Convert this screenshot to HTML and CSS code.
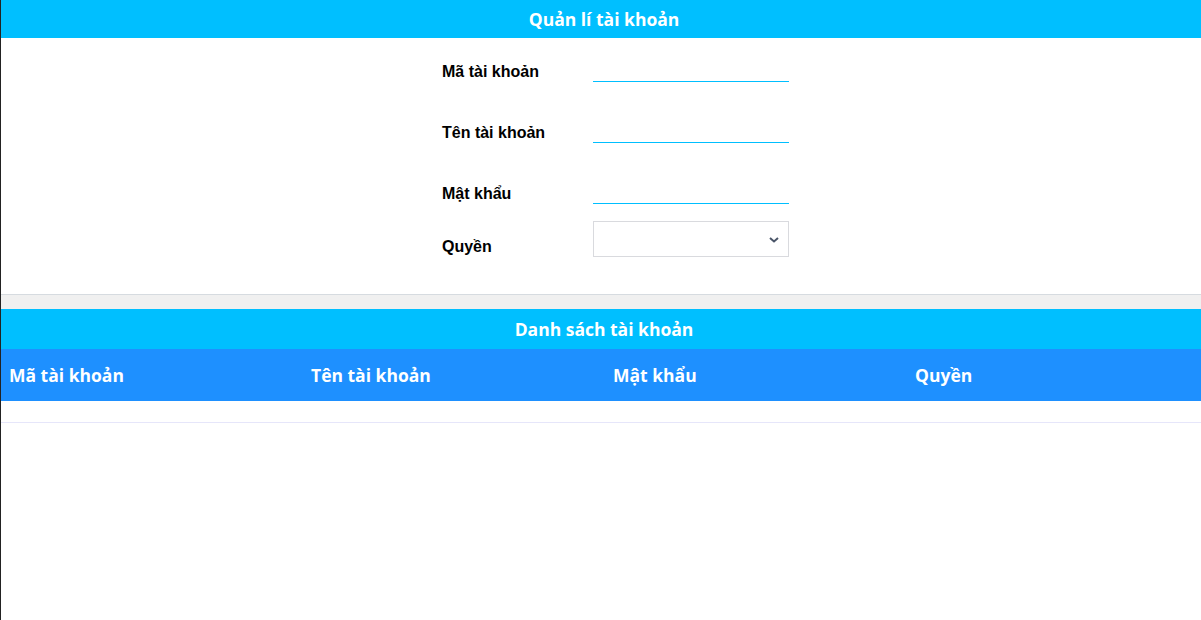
FILE: index.html
```html
<!DOCTYPE html>
<html lang="vi">
<head>
<meta charset="utf-8">
<title>Quản lí tài khoản</title>
<link rel="stylesheet" href="styles.css">
</head>
<body>
<div class="page">
  <div class="bar bar-top">Quản lí tài khoản</div>
  <div class="form-area">
    <div class="form">
      <div class="row">
        <label class="label">Mã tài khoản</label>
        <input class="field" type="text">
      </div>
      <div class="row">
        <label class="label">Tên tài khoản</label>
        <input class="field" type="text">
      </div>
      <div class="row">
        <label class="label">Mật khẩu</label>
        <input class="field" type="password">
      </div>
      <div class="row row-select">
        <label class="label">Quyền</label>
        <div class="select-wrap">
          <select class="select"><option></option></select>
          <svg class="chev" width="10" height="6" viewBox="0 0 10 6"><path d="M1 1 L5 4.5 L9 1" fill="none" stroke="#4a5568" stroke-width="2"/></svg>
        </div>
      </div>
    </div>
  </div>
  <div class="spacer"></div>
  <div class="bar bar-list">Danh sách tài khoản</div>
  <div class="thead">
    <div class="th">Mã tài khoản</div>
    <div class="th">Tên tài khoản</div>
    <div class="th">Mật khẩu</div>
    <div class="th">Quyền</div>
  </div>
  <div class="tbody"></div>
</div>
</body>
</html>
```
FILE: styles.css
```css
html, body { margin: 0; padding: 0; background: #fff; }
.page {
  border-left: 1px solid #222;
  min-height: 620px;
  box-sizing: border-box;
  font-family: "Open Sans", "Noto Sans", sans-serif;
}
.bar {
  background: #00bfff;
  color: #fff;
  font-weight: 700;
  font-size: 17.5px;
  text-align: center;
  padding-left: 6px;
}
.bar-top { height: 38px; line-height: 38px; }
.bar-list { height: 40px; line-height: 40px; }
.form-area {
  border-bottom: 1px solid #d6dbe0;
  padding: 8px 0 37px;
}
.form {
  margin-left: 441px;
  width: 348px;
  display: flex;
  flex-direction: column;
  gap: 25px;
}
.row {
  display: grid;
  grid-template-columns: 151px 196px;
  align-items: end;
  height: 36px;
}
.row-select { margin-top: -8px; }
.label {
  font-family: "Liberation Sans", Arial, sans-serif;
  font-weight: 700;
  font-size: 16px;
  color: #000;
  padding-bottom: 1px;
}
.field {
  box-sizing: border-box;
  width: 196px;
  height: 36px;
  border: none;
  border-bottom: 1px solid #00bfff;
  outline: none;
  padding: 0;
  background: transparent;
}
.select-wrap { position: relative; width: 196px; height: 36px; }
.select {
  box-sizing: border-box;
  width: 196px;
  height: 36px;
  border: 1px solid #d9dade;
  background: #fff;
  appearance: none;
  -webkit-appearance: none;
  outline: none;
}
.chev { position: absolute; left: 176px; top: 16px; }
.spacer { height: 14px; background: #f0f0f0; }
.thead {
  background: #1e90ff;
  height: 52px;
  display: grid;
  grid-template-columns: 302px 302px 302px 1fr;
  align-items: center;
}
.th {
  color: #fff;
  font-weight: 700;
  font-size: 17.5px;
  padding-left: 8px;
}
.tbody {
  height: 21px;
  border-bottom: 1px solid #e6e6fa;
}
```
